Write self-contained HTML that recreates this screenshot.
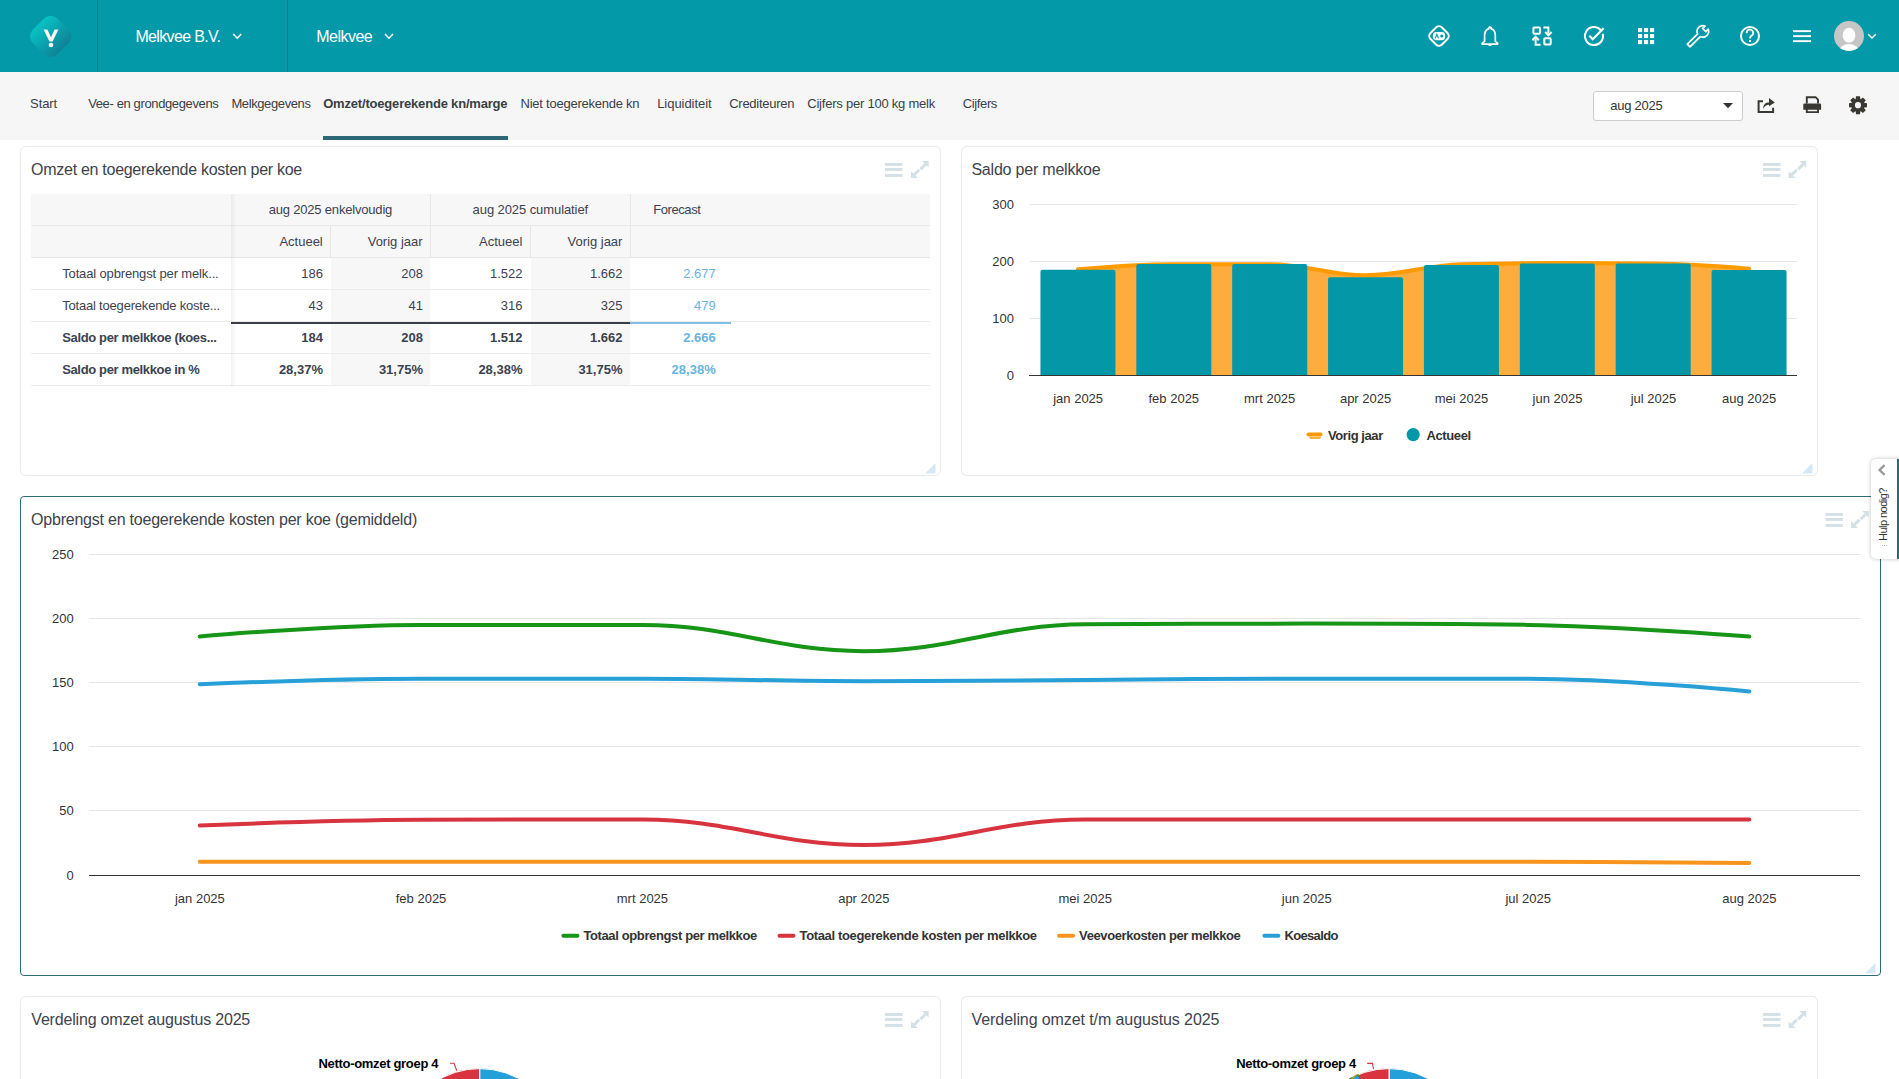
<!DOCTYPE html>
<html><head><meta charset="utf-8"><title>Melkvee dashboard</title>
<style>
html,body{margin:0;padding:0;}
body{width:1899px;height:1079px;overflow:hidden;position:relative;background:#fff;font-family:"Liberation Sans",sans-serif;}
.t{position:absolute;white-space:nowrap;line-height:1;}
svg{position:absolute;left:0;top:0;}
</style></head><body>

<div style="position:absolute;left:0px;top:0px;width:1899px;height:72px;background:#0499a9"></div>
<div style="position:absolute;left:97px;top:0px;width:1px;height:72px;background:#0a7f8d"></div>
<div style="position:absolute;left:287px;top:0px;width:1px;height:72px;background:#0a7f8d"></div>
<div style="position:absolute;left:0px;top:72px;width:1899px;height:68px;background:#f6f6f6"></div>
<div style="position:absolute;left:323px;top:136px;width:185px;height:4px;background:#2e6878"></div>
<div style="position:absolute;left:1593px;top:91px;width:150px;height:30px;background:#fff;border:1px solid #cdcdcd;border-radius:3px;box-sizing:border-box"></div>
<div style="position:absolute;left:20px;top:146px;width:921px;height:330px;background:#fff;border:1px solid #ebebeb;border-radius:6px;box-sizing:border-box;box-shadow:0 0 1px rgba(0,0,0,0.05)"></div>
<div style="position:absolute;left:961px;top:146px;width:857px;height:330px;background:#fff;border:1px solid #ebebeb;border-radius:6px;box-sizing:border-box;box-shadow:0 0 1px rgba(0,0,0,0.05)"></div>
<div style="position:absolute;left:20px;top:496px;width:1861px;height:480px;background:#fff;border:1px solid #2e6b79;border-radius:4px;box-sizing:border-box;box-shadow:0 0 1px rgba(0,0,0,0.05)"></div>
<div style="position:absolute;left:20px;top:996px;width:921px;height:125px;background:#fff;border:1px solid #ebebeb;border-radius:6px;box-sizing:border-box;box-shadow:0 0 1px rgba(0,0,0,0.05)"></div>
<div style="position:absolute;left:961px;top:996px;width:857px;height:125px;background:#fff;border:1px solid #ebebeb;border-radius:6px;box-sizing:border-box;box-shadow:0 0 1px rgba(0,0,0,0.05)"></div>
<div style="position:absolute;left:31px;top:194px;width:899px;height:64px;background:#f7f7f7"></div>
<div style="position:absolute;left:31px;top:225px;width:899px;height:1px;background:#e8e8e8"></div>
<div style="position:absolute;left:31px;top:257px;width:899px;height:1px;background:#e8e8e8"></div>
<div style="position:absolute;left:331px;top:258px;width:99px;height:128px;background:#f7f7f7"></div>
<div style="position:absolute;left:531px;top:258px;width:99px;height:128px;background:#f7f7f7"></div>
<div style="position:absolute;left:31px;top:289px;width:899px;height:1px;background:#ececec"></div>
<div style="position:absolute;left:31px;top:321px;width:899px;height:1px;background:#ececec"></div>
<div style="position:absolute;left:31px;top:353px;width:899px;height:1px;background:#ececec"></div>
<div style="position:absolute;left:31px;top:385px;width:899px;height:1px;background:#ececec"></div>
<div style="position:absolute;left:231px;top:322px;width:399px;height:1.5px;background:#3a3f47"></div>
<div style="position:absolute;left:630px;top:322px;width:101px;height:1.5px;background:#7fbfe6"></div>
<div style="position:absolute;left:430px;top:194px;width:1px;height:64px;background:#e6e6e6"></div>
<div style="position:absolute;left:630px;top:194px;width:1px;height:64px;background:#e6e6e6"></div>
<div style="position:absolute;left:330px;top:226px;width:1px;height:32px;background:#e6e6e6"></div>
<div style="position:absolute;left:530px;top:226px;width:1px;height:32px;background:#e6e6e6"></div>
<div style="position:absolute;left:231px;top:194px;width:5px;height:192px;background:linear-gradient(to right,rgba(0,0,0,0.05),rgba(0,0,0,0))"></div>
<div style="position:absolute;left:1871px;top:459px;width:40px;height:100px;background:#fff;border-radius:5px 0 0 5px;box-shadow:0 0 4px rgba(0,0,0,0.25)"></div>
<div style="position:absolute;left:1897px;top:459px;width:2px;height:100px;background:#2e6878"></div>
<svg width="1899" height="1079" viewBox="0 0 1899 1079">
<defs><linearGradient id="lg" x1="0" y1="0" x2="1" y2="0"><stop offset="0" stop-color="#08c3c5"/><stop offset="1" stop-color="#0f8296"/></linearGradient></defs>
<rect x="33.45" y="19.05" width="34.5" height="34.5" rx="9" transform="rotate(45 50.7 36.3)" fill="url(#lg)"/>
<path d="M43.6 29.6 L47.4 29.6 L51 37.2 L54.6 29.6 L58.4 29.6 L52.6 41.6 L49.4 41.6 Z" fill="#fbf6ef"/>
<circle cx="51" cy="45" r="2.3" fill="#fbf6ef"/>
<path d="M233.2 34 L237.2 38.2 L241.2 34" stroke="#fff" stroke-width="1.6" fill="none"/>
<path d="M385 34 L389 38.2 L393 34" stroke="#fff" stroke-width="1.6" fill="none"/>
<rect x="1430.9" y="27.9" width="16.2" height="16.2" rx="4.2" transform="rotate(45 1439 36)" fill="none" stroke="#fff" stroke-width="2"/>
<rect x="1432.9" y="32" width="12.2" height="8.2" rx="3.4" fill="#fff"/>
<path d="M1435.3 38.2 L1436.9 34.2 L1438.5 38.2" stroke="#0499a9" stroke-width="1.1" fill="none"/>
<circle cx="1441.8" cy="36" r="1.6" fill="#0499a9"/>
<path transform="translate(0 0.8)" d="M1490 26.3 a1 1 0 0 1 1 1.5 C1494.5 28.8 1495.3 32 1495.3 35 L1495.3 40.6 L1497.6 42.4 L1497.6 43.4 L1482.2 43.4 L1482.2 42.4 L1484.6 40.6 L1484.6 35 C1484.6 32 1485.5 28.8 1489 27.8 a1 1 0 0 1 1 -1.5 Z" fill="none" stroke="#fff" stroke-width="1.7" stroke-linejoin="round"/>
<path d="M1487.8 44.3 L1492.2 44.3 A2.2 1.8 0 0 1 1487.8 44.3 Z" fill="#fff"/>
<rect x="1533.4" y="27.6" width="6.6" height="6.2" rx="1" fill="none" stroke="#fff" stroke-width="2"/>
<rect x="1544.3" y="38.3" width="6.4" height="6.2" rx="1" fill="none" stroke="#fff" stroke-width="2"/>
<path d="M1543.4 27.4 L1548.4 27.4 L1548.4 34" fill="none" stroke="#fff" stroke-width="2"/>
<path d="M1545.2 32 L1548.4 35.4 L1551.6 32" fill="none" stroke="#fff" stroke-width="2"/>
<path d="M1540.5 44.8 L1535.6 44.8 L1535.6 38.2" fill="none" stroke="#fff" stroke-width="2"/>
<path d="M1532.4 40.2 L1535.6 36.8 L1538.8 40.2" fill="none" stroke="#fff" stroke-width="2"/>
<path d="M1600.9 30.3 A9 9 0 1 0 1602.7 33.8" fill="none" stroke="#fff" stroke-width="2"/>
<path d="M1589.4 35.8 L1592.7 39.2 L1603.6 28.2" fill="none" stroke="#fff" stroke-width="2.2"/>
<rect x="1638" y="28" width="4.1" height="4.1" fill="#fff"/>
<rect x="1638" y="34" width="4.1" height="4.1" fill="#fff"/>
<rect x="1638" y="40" width="4.1" height="4.1" fill="#fff"/>
<rect x="1644" y="28" width="4.1" height="4.1" fill="#fff"/>
<rect x="1644" y="34" width="4.1" height="4.1" fill="#fff"/>
<rect x="1644" y="40" width="4.1" height="4.1" fill="#fff"/>
<rect x="1650" y="28" width="4.1" height="4.1" fill="#fff"/>
<rect x="1650" y="34" width="4.1" height="4.1" fill="#fff"/>
<rect x="1650" y="40" width="4.1" height="4.1" fill="#fff"/>
<path transform="translate(1702.8 31.4) rotate(45)" d="M -1.9 20 L -1.9 5.4 A 5.8 5.8 0 0 1 -2.2 -5.4 L -2.2 -2 L 2.2 -2 L 2.2 -5.4 A 5.8 5.8 0 0 1 1.9 5.4 L 1.9 20 Z" fill="none" stroke="#fff" stroke-width="1.7" stroke-linejoin="round"/>
<circle cx="1750" cy="36" r="9" fill="none" stroke="#fff" stroke-width="2"/>
<path d="M1746.8 33.2 A3.2 3.2 0 1 1 1751.6 35.6 C1750.4 36.4 1750 37 1750 38.6" fill="none" stroke="#fff" stroke-width="1.8"/>
<rect x="1749" y="40" width="2" height="2" fill="#fff"/>
<rect x="1793" y="30.2" width="18" height="1.9" fill="#fff"/>
<rect x="1793" y="35.2" width="18" height="1.9" fill="#fff"/>
<rect x="1793" y="40.2" width="18" height="1.9" fill="#fff"/>
<clipPath id="av"><circle cx="1849" cy="36" r="15"/></clipPath>
<circle cx="1849" cy="36" r="15" fill="#c6c6c6"/>
<g clip-path="url(#av)"><ellipse cx="1849" cy="35.2" rx="6.4" ry="7.4" fill="#fff"/><ellipse cx="1849" cy="52" rx="10" ry="8" fill="#fff"/></g>
<path d="M1868.2 34.3 L1872 38 L1875.8 34.3" stroke="#fff" stroke-width="1.5" fill="none"/>
<path d="M1723 103 L1733 103 L1728 108.2 Z" fill="#333"/>
<path d="M1763 101.2 L1758.6 101.2 L1758.6 111.9 L1773.1 111.9 L1773.1 107.8" fill="none" stroke="#3a3832" stroke-width="2"/>
<path d="M1763.2 109 C1763.2 104.5 1765.5 102.6 1769 102.6 L1769 98 L1774.8 102.4 L1769 106.2 L1769 104.8 C1766.5 104.8 1764.5 106 1763.2 109 Z" fill="#3a3832"/>
<path d="M1806.8 103.6 L1806.8 97.2 L1815.6 97.2 L1818 99.6 L1818 103.6" fill="none" stroke="#3a3832" stroke-width="1.9"/>
<path d="M1803.3 104.8 Q1803.3 103.5 1804.6 103.5 L1819.8 103.5 Q1821.1 103.5 1821.1 104.8 L1821.1 109.7 L1803.3 109.7 Z" fill="#3a3832"/>
<path d="M1806.8 109 L1806.8 112.1 L1818 112.1 L1818 109" fill="none" stroke="#3a3832" stroke-width="1.9"/>
<path d="M1855.99 96.22 L1860.01 96.22 L1860.33 99.02 L1860.72 99.19 L1862.93 97.43 L1865.77 100.27 L1864.01 102.48 L1864.18 102.87 L1866.98 103.19 L1866.98 107.21 L1864.18 107.53 L1864.01 107.92 L1865.77 110.13 L1862.93 112.97 L1860.72 111.21 L1860.33 111.38 L1860.01 114.18 L1855.99 114.18 L1855.67 111.38 L1855.28 111.21 L1853.07 112.97 L1850.23 110.13 L1851.99 107.92 L1851.82 107.53 L1849.02 107.21 L1849.02 103.19 L1851.82 102.87 L1851.99 102.48 L1850.23 100.27 L1853.07 97.43 L1855.28 99.19 L1855.67 99.02 Z M1861.1 105.2 A3.1 3.1 0 1 0 1854.9 105.2 A3.1 3.1 0 1 0 1861.1 105.2 Z" fill="#3a3832" fill-rule="evenodd"/>
<rect x="885" y="163" width="17.4" height="2.9" fill="#d3e0e5"/>
<rect x="885" y="168" width="17.4" height="2.9" fill="#d3e0e5"/>
<rect x="885" y="174" width="17.4" height="2.9" fill="#d3e0e5"/>
<path d="M921.9 161 L928.6 161 L928.6 167.6 Z" fill="#d3e0e5"/>
<path d="M920.5 169.2 L925.5 164.2" stroke="#d3e0e5" stroke-width="3"/>
<path d="M911 178 L911 171.2 L917.8 178 Z" fill="#d3e0e5"/>
<path d="M914.2 174.8 L919.2 169.8" stroke="#d3e0e5" stroke-width="3"/>
<rect x="1763" y="163" width="17.4" height="2.9" fill="#d3e0e5"/>
<rect x="1763" y="168" width="17.4" height="2.9" fill="#d3e0e5"/>
<rect x="1763" y="174" width="17.4" height="2.9" fill="#d3e0e5"/>
<path d="M1799.5 161 L1806.1999999999998 161 L1806.1999999999998 167.6 Z" fill="#d3e0e5"/>
<path d="M1798.1 169.2 L1803.1 164.2" stroke="#d3e0e5" stroke-width="3"/>
<path d="M1788.6 178 L1788.6 171.2 L1795.3999999999999 178 Z" fill="#d3e0e5"/>
<path d="M1791.8 174.8 L1796.8 169.8" stroke="#d3e0e5" stroke-width="3"/>
<rect x="1825.5" y="513" width="17.4" height="2.9" fill="#d3e0e5"/>
<rect x="1825.5" y="518" width="17.4" height="2.9" fill="#d3e0e5"/>
<rect x="1825.5" y="524" width="17.4" height="2.9" fill="#d3e0e5"/>
<path d="M1862.1000000000001 511 L1868.8 511 L1868.8 517.6 Z" fill="#d3e0e5"/>
<path d="M1860.7 519.2 L1865.7 514.2" stroke="#d3e0e5" stroke-width="3"/>
<path d="M1851.2 528 L1851.2 521.2 L1858.0 528 Z" fill="#d3e0e5"/>
<path d="M1854.4 524.8 L1859.4 519.8" stroke="#d3e0e5" stroke-width="3"/>
<rect x="885" y="1013" width="17.4" height="2.9" fill="#d3e0e5"/>
<rect x="885" y="1018" width="17.4" height="2.9" fill="#d3e0e5"/>
<rect x="885" y="1024" width="17.4" height="2.9" fill="#d3e0e5"/>
<path d="M921.9 1011 L928.6 1011 L928.6 1017.6 Z" fill="#d3e0e5"/>
<path d="M920.5 1019.2 L925.5 1014.2" stroke="#d3e0e5" stroke-width="3"/>
<path d="M911 1028 L911 1021.2 L917.8 1028 Z" fill="#d3e0e5"/>
<path d="M914.2 1024.8 L919.2 1019.8" stroke="#d3e0e5" stroke-width="3"/>
<rect x="1763" y="1013" width="17.4" height="2.9" fill="#d3e0e5"/>
<rect x="1763" y="1018" width="17.4" height="2.9" fill="#d3e0e5"/>
<rect x="1763" y="1024" width="17.4" height="2.9" fill="#d3e0e5"/>
<path d="M1799.5 1011 L1806.1999999999998 1011 L1806.1999999999998 1017.6 Z" fill="#d3e0e5"/>
<path d="M1798.1 1019.2 L1803.1 1014.2" stroke="#d3e0e5" stroke-width="3"/>
<path d="M1788.6 1028 L1788.6 1021.2 L1795.3999999999999 1028 Z" fill="#d3e0e5"/>
<path d="M1791.8 1024.8 L1796.8 1019.8" stroke="#d3e0e5" stroke-width="3"/>
<path d="M926 473 L935 464 L935 473 Z" fill="#d6e7f5" stroke="#d6e7f5" stroke-width="1" stroke-linejoin="round"/>
<path d="M1803 473 L1812 464 L1812 473 Z" fill="#d6e7f5" stroke="#d6e7f5" stroke-width="1" stroke-linejoin="round"/>
<path d="M1866 973 L1875 964 L1875 973 Z" fill="#d6e7f5" stroke="#d6e7f5" stroke-width="1" stroke-linejoin="round"/>
<rect x="1030" y="204.0" width="767" height="1" fill="#e6e6e6"/>
<rect x="1030" y="261.0" width="767" height="1" fill="#e6e6e6"/>
<rect x="1030" y="318.0" width="767" height="1" fill="#e6e6e6"/>
<path d="M 1077.94 269.29 C 1077.94 269.29 1135.46 264.18 1173.81 264.18 C 1212.16 264.18 1231.34 264.18 1269.69 264.18 C 1308.04 264.18 1327.21 275.26 1365.56 275.26 C 1403.91 275.26 1423.09 265.31 1461.44 264.18 C 1499.79 263.04 1518.96 263.04 1557.31 263.04 C 1595.66 263.04 1614.84 263.04 1653.19 263.61 C 1691.54 264.18 1749.06 268.72 1749.06 268.72 L 1749.06 375 L 1077.94 375 Z" fill="#fdac3d"/>
<path d="M 1077.94 269.29 C 1077.94 269.29 1135.46 264.18 1173.81 264.18 C 1212.16 264.18 1231.34 264.18 1269.69 264.18 C 1308.04 264.18 1327.21 275.26 1365.56 275.26 C 1403.91 275.26 1423.09 265.31 1461.44 264.18 C 1499.79 263.04 1518.96 263.04 1557.31 263.04 C 1595.66 263.04 1614.84 263.04 1653.19 263.61 C 1691.54 264.18 1749.06 268.72 1749.06 268.72" fill="none" stroke="#ff9a00" stroke-width="4" stroke-linecap="round"/>
<path d="M1040.44 375 L1040.44 271.86 Q1040.44 269.86 1042.44 269.86 L1113.44 269.86 Q1115.44 269.86 1115.44 271.86 L1115.44 375 Z" fill="#0497a7"/>
<path d="M1136.31 375 L1136.31 265.89 Q1136.31 263.89 1138.31 263.89 L1209.31 263.89 Q1211.31 263.89 1211.31 265.89 L1211.31 375 Z" fill="#0497a7"/>
<path d="M1232.19 375 L1232.19 266.00 Q1232.19 264.00 1234.19 264.00 L1305.19 264.00 Q1307.19 264.00 1307.19 266.00 L1307.19 375 Z" fill="#0497a7"/>
<path d="M1328.06 375 L1328.06 279.25 Q1328.06 277.25 1330.06 277.25 L1401.06 277.25 Q1403.06 277.25 1403.06 279.25 L1403.06 375 Z" fill="#0497a7"/>
<path d="M1423.94 375 L1423.94 266.97 Q1423.94 264.97 1425.94 264.97 L1496.94 264.97 Q1498.94 264.97 1498.94 266.97 L1498.94 375 Z" fill="#0497a7"/>
<path d="M1519.81 375 L1519.81 265.61 Q1519.81 263.61 1521.81 263.61 L1592.81 263.61 Q1594.81 263.61 1594.81 265.61 L1594.81 375 Z" fill="#0497a7"/>
<path d="M1615.69 375 L1615.69 265.61 Q1615.69 263.61 1617.69 263.61 L1688.69 263.61 Q1690.69 263.61 1690.69 265.61 L1690.69 375 Z" fill="#0497a7"/>
<path d="M1711.56 375 L1711.56 272.09 Q1711.56 270.09 1713.56 270.09 L1784.56 270.09 Q1786.56 270.09 1786.56 272.09 L1786.56 375 Z" fill="#0497a7"/>
<rect x="1029" y="375" width="768" height="1" fill="#333333"/>
<path d="M1308.5 434.6 L1320.5 434.6" stroke="#ff9a00" stroke-width="4" stroke-linecap="round"/>
<path d="M1309 437 L1321 437 L1320 439 L1310 439 Z" fill="#fdac3d"/>
<circle cx="1413.2" cy="434.6" r="6.6" fill="#0497a7"/>
<rect x="89" y="810.00" width="1771" height="1" fill="#e6e6e6"/>
<rect x="89" y="746.00" width="1771" height="1" fill="#e6e6e6"/>
<rect x="89" y="682.00" width="1771" height="1" fill="#e6e6e6"/>
<rect x="89" y="618.00" width="1771" height="1" fill="#e6e6e6"/>
<rect x="89" y="554.00" width="1771" height="1" fill="#e6e6e6"/>
<rect x="89" y="875" width="1771" height="1" fill="#333333"/>
<path d="M 199.69 825.48 C 199.69 825.48 332.51 820.23 421.06 819.84 C 509.61 819.46 553.89 819.46 642.44 819.46 C 730.99 819.46 775.26 845.06 863.81 845.06 C 952.36 845.06 996.64 819.46 1085.19 819.46 C 1173.74 819.46 1218.01 819.46 1306.56 819.46 C 1395.11 819.46 1439.39 819.46 1527.94 819.46 C 1616.49 819.46 1749.31 819.46 1749.31 819.46" fill="none" stroke="#d7343f" stroke-width="4" stroke-linecap="round"/>
<path d="M 199.69 861.70 C 199.69 861.70 332.51 861.70 421.06 861.70 C 509.61 861.70 553.89 861.70 642.44 861.70 C 730.99 861.70 775.26 861.70 863.81 861.70 C 952.36 861.70 996.64 861.70 1085.19 861.70 C 1173.74 861.70 1218.01 861.70 1306.56 861.70 C 1395.11 861.70 1439.39 861.70 1527.94 861.70 C 1616.49 861.70 1749.31 862.98 1749.31 862.98" fill="none" stroke="#f7941d" stroke-width="4" stroke-linecap="round"/>
<path d="M 199.69 684.29 C 199.69 684.29 332.51 678.66 421.06 678.66 C 509.61 678.66 553.89 678.66 642.44 678.66 C 730.99 678.66 775.26 681.22 863.81 681.22 C 952.36 681.22 996.64 680.45 1085.19 679.94 C 1173.74 679.43 1218.01 678.66 1306.56 678.66 C 1395.11 678.66 1439.39 678.66 1527.94 678.66 C 1616.49 678.66 1749.31 691.46 1749.31 691.46" fill="none" stroke="#27a0d8" stroke-width="4" stroke-linecap="round"/>
<path d="M 199.69 636.42 C 199.69 636.42 332.51 624.90 421.06 624.90 C 509.61 624.90 553.89 624.90 642.44 624.90 C 730.99 624.90 775.26 651.14 863.81 651.14 C 952.36 651.14 996.64 624.90 1085.19 624.26 C 1173.74 623.62 1218.01 623.62 1306.56 623.62 C 1395.11 623.62 1439.39 623.62 1527.94 624.90 C 1616.49 626.18 1749.31 636.42 1749.31 636.42" fill="none" stroke="#169516" stroke-width="4" stroke-linecap="round"/>
<path d="M563.4 935.8 L577.4 935.8" stroke="#169516" stroke-width="4" stroke-linecap="round"/>
<path d="M779.5 935.8 L793.5 935.8" stroke="#d7343f" stroke-width="4" stroke-linecap="round"/>
<path d="M1059.1 935.8 L1073.1 935.8" stroke="#f7941d" stroke-width="4" stroke-linecap="round"/>
<path d="M1264.4 935.8 L1278.4 935.8" stroke="#27a0d8" stroke-width="4" stroke-linecap="round"/>
<path d="M479.7 1150 L479.70 1068.60 A81.4 81.4 0 0 1 520.40 1220.49 Z" fill="#23a0da" stroke="#fff" stroke-width="1"/>
<path d="M479.7 1150 L403.21 1122.16 A81.4 81.4 0 0 1 479.70 1068.60 Z" fill="#d8333f" stroke="#fff" stroke-width="1"/>
<path d="M450 1063.3 L454 1063.3 L456.8 1070.8" fill="none" stroke="#d8333f" stroke-width="1.1"/>
<path d="M1389 1150 L1389.00 1068.60 A81.4 81.4 0 0 1 1429.70 1220.49 Z" fill="#23a0da" stroke="#fff" stroke-width="1"/>
<path d="M1389 1150 L1312.51 1122.16 A81.4 81.4 0 0 1 1389.00 1068.60 Z" fill="#d8333f" stroke="#fff" stroke-width="1"/>
<path d="M1367.2 1063.4 L1372.5 1063.4 L1373.5 1069" fill="none" stroke="#d8333f" stroke-width="1.1"/>
<path d="M1389 1150 L1341.15 1084.15 A81.4 81.4 0 0 1 1358.24 1074.63 Z" fill="#23a0da" stroke="#169516" stroke-width="1"/>
<path d="M1352 1079 L1356.5 1074.5" stroke="#f7941d" stroke-width="1.2"/>
<path d="M1884.6 465.2 L1879.6 470 L1884.6 474.8" fill="none" stroke="#999" stroke-width="2.3"/>
<rect x="1882" y="545" width="1" height="1" fill="#bbb"/>
<rect x="1884" y="545" width="1" height="1" fill="#bbb"/>
<rect x="1886" y="545" width="1" height="1" fill="#bbb"/>
</svg>
<div class="t" style="left:135.40px;top:29.00px;font-size:16px;color:#fff;letter-spacing:-0.655px;">Melkvee B.V.</div>
<div class="t" style="left:316.20px;top:29.00px;font-size:16px;color:#fff;letter-spacing:-0.517px;">Melkvee</div>
<div class="t" style="left:30.10px;top:97.00px;font-size:13px;color:#3a3f47;letter-spacing:-0.100px;">Start</div>
<div class="t" style="left:88.20px;top:97.00px;font-size:13px;color:#3a3f47;letter-spacing:-0.375px;">Vee- en grondgegevens</div>
<div class="t" style="left:231.40px;top:97.00px;font-size:13px;color:#3a3f47;letter-spacing:-0.391px;">Melkgegevens</div>
<div class="t" style="left:323.20px;top:97.00px;font-size:13px;color:#3a3f47;font-weight:bold;letter-spacing:-0.188px;">Omzet/toegerekende kn/marge</div>
<div class="t" style="left:520.50px;top:97.00px;font-size:13px;color:#3a3f47;letter-spacing:-0.237px;">Niet toegerekende kn</div>
<div class="t" style="left:657.20px;top:97.00px;font-size:13px;color:#3a3f47;letter-spacing:-0.050px;">Liquiditeit</div>
<div class="t" style="left:729.20px;top:97.00px;font-size:13px;color:#3a3f47;letter-spacing:-0.260px;">Crediteuren</div>
<div class="t" style="left:807.30px;top:97.00px;font-size:13px;color:#3a3f47;letter-spacing:-0.227px;">Cijfers per 100 kg melk</div>
<div class="t" style="left:962.80px;top:97.00px;font-size:13px;color:#3a3f47;letter-spacing:-0.383px;">Cijfers</div>
<div class="t" style="left:1610.20px;top:99.00px;font-size:13px;color:#333;letter-spacing:-0.229px;">aug 2025</div>
<div class="t" style="left:31.10px;top:162.00px;font-size:16px;color:#3d434d;letter-spacing:-0.283px;">Omzet en toegerekende kosten per koe</div>
<div class="t" style="left:971.40px;top:162.00px;font-size:16px;color:#3d434d;letter-spacing:-0.206px;">Saldo per melkkoe</div>
<div class="t" style="left:31.10px;top:512.00px;font-size:16px;color:#3d434d;letter-spacing:-0.225px;">Opbrengst en toegerekende kosten per koe (gemiddeld)</div>
<div class="t" style="left:31.30px;top:1012.00px;font-size:16px;color:#3d434d;letter-spacing:-0.186px;">Verdeling omzet augustus 2025</div>
<div class="t" style="left:971.60px;top:1012.00px;font-size:16px;color:#3d434d;letter-spacing:-0.094px;">Verdeling omzet t/m augustus 2025</div>
<div class="t" style="left:268.70px;top:203.00px;font-size:13px;color:#3b4250;letter-spacing:-0.189px;">aug 2025 enkelvoudig</div>
<div class="t" style="left:472.60px;top:203.00px;font-size:13px;color:#3b4250;letter-spacing:-0.083px;">aug 2025 cumulatief</div>
<div class="t" style="left:653.20px;top:203.00px;font-size:13px;color:#3b4250;letter-spacing:-0.414px;">Forecast</div>
<div class="t" style="left:279.40px;top:235.00px;font-size:13px;color:#3b4250;">Actueel</div>
<div class="t" style="left:367.70px;top:235.00px;font-size:13px;color:#3b4250;">Vorig jaar</div>
<div class="t" style="left:479.00px;top:235.00px;font-size:13px;color:#3b4250;">Actueel</div>
<div class="t" style="left:567.50px;top:235.00px;font-size:13px;color:#3b4250;">Vorig jaar</div>
<div class="t" style="left:62.20px;top:267.00px;font-size:13px;color:#3b4250;letter-spacing:-0.144px;">Totaal opbrengst per melk...</div>
<div class="t" style="left:301.30px;top:267.00px;font-size:13px;color:#3b4250;">186</div>
<div class="t" style="left:401.30px;top:267.00px;font-size:13px;color:#3b4250;">208</div>
<div class="t" style="left:490.00px;top:267.00px;font-size:13px;color:#3b4250;">1.522</div>
<div class="t" style="left:590.00px;top:267.00px;font-size:13px;color:#3b4250;">1.662</div>
<div class="t" style="left:683.20px;top:267.00px;font-size:13px;color:#6ab4e0;">2.677</div>
<div class="t" style="left:62.20px;top:299.00px;font-size:13px;color:#3b4250;letter-spacing:-0.196px;">Totaal toegerekende koste...</div>
<div class="t" style="left:308.50px;top:299.00px;font-size:13px;color:#3b4250;">43</div>
<div class="t" style="left:408.50px;top:299.00px;font-size:13px;color:#3b4250;">41</div>
<div class="t" style="left:500.80px;top:299.00px;font-size:13px;color:#3b4250;">316</div>
<div class="t" style="left:600.80px;top:299.00px;font-size:13px;color:#3b4250;">325</div>
<div class="t" style="left:694.00px;top:299.00px;font-size:13px;color:#6ab4e0;">479</div>
<div class="t" style="left:62.20px;top:331.00px;font-size:13px;color:#3b4250;font-weight:bold;letter-spacing:-0.348px;">Saldo per melkkoe (koes...</div>
<div class="t" style="left:301.30px;top:331.00px;font-size:13px;color:#3b4250;font-weight:bold;">184</div>
<div class="t" style="left:401.30px;top:331.00px;font-size:13px;color:#3b4250;font-weight:bold;">208</div>
<div class="t" style="left:490.00px;top:331.00px;font-size:13px;color:#3b4250;font-weight:bold;">1.512</div>
<div class="t" style="left:590.00px;top:331.00px;font-size:13px;color:#3b4250;font-weight:bold;">1.662</div>
<div class="t" style="left:683.20px;top:331.00px;font-size:13px;color:#6ab4e0;font-weight:bold;">2.666</div>
<div class="t" style="left:62.20px;top:363.00px;font-size:13px;color:#3b4250;font-weight:bold;letter-spacing:-0.357px;">Saldo per melkkoe in %</div>
<div class="t" style="left:278.90px;top:363.00px;font-size:13px;color:#3b4250;font-weight:bold;">28,37%</div>
<div class="t" style="left:378.90px;top:363.00px;font-size:13px;color:#3b4250;font-weight:bold;">31,75%</div>
<div class="t" style="left:478.40px;top:363.00px;font-size:13px;color:#3b4250;font-weight:bold;">28,38%</div>
<div class="t" style="left:578.40px;top:363.00px;font-size:13px;color:#3b4250;font-weight:bold;">31,75%</div>
<div class="t" style="left:671.60px;top:363.00px;font-size:13px;color:#6ab4e0;font-weight:bold;">28,38%</div>
<div class="t" style="left:992.30px;top:198.00px;font-size:13px;color:#333;">300</div>
<div class="t" style="left:992.30px;top:255.00px;font-size:13px;color:#333;">200</div>
<div class="t" style="left:992.30px;top:312.00px;font-size:13px;color:#333;">100</div>
<div class="t" style="left:1006.80px;top:369.00px;font-size:13px;color:#333;">0</div>
<div class="t" style="left:1053.19px;top:392.00px;font-size:13px;color:#333;">jan 2025</div>
<div class="t" style="left:1148.51px;top:392.00px;font-size:13px;color:#333;">feb 2025</div>
<div class="t" style="left:1244.04px;top:392.00px;font-size:13px;color:#333;">mrt 2025</div>
<div class="t" style="left:1339.91px;top:392.00px;font-size:13px;color:#333;">apr 2025</div>
<div class="t" style="left:1434.69px;top:392.00px;font-size:13px;color:#333;">mei 2025</div>
<div class="t" style="left:1532.56px;top:392.00px;font-size:13px;color:#333;">jun 2025</div>
<div class="t" style="left:1630.64px;top:392.00px;font-size:13px;color:#333;">jul 2025</div>
<div class="t" style="left:1721.96px;top:392.00px;font-size:13px;color:#333;">aug 2025</div>
<div class="t" style="left:1328.00px;top:429.00px;font-size:13px;color:#333;font-weight:bold;letter-spacing:-0.422px;">Vorig jaar</div>
<div class="t" style="left:1426.40px;top:429.00px;font-size:13px;color:#333;font-weight:bold;letter-spacing:-0.367px;">Actueel</div>
<div class="t" style="left:52.10px;top:548.00px;font-size:13px;color:#333;">250</div>
<div class="t" style="left:52.10px;top:612.00px;font-size:13px;color:#333;">200</div>
<div class="t" style="left:52.10px;top:676.00px;font-size:13px;color:#333;">150</div>
<div class="t" style="left:52.10px;top:740.00px;font-size:13px;color:#333;">100</div>
<div class="t" style="left:59.30px;top:804.00px;font-size:13px;color:#333;">50</div>
<div class="t" style="left:66.60px;top:869.00px;font-size:13px;color:#333;">0</div>
<div class="t" style="left:174.94px;top:892.00px;font-size:13px;color:#333;">jan 2025</div>
<div class="t" style="left:395.76px;top:892.00px;font-size:13px;color:#333;">feb 2025</div>
<div class="t" style="left:616.79px;top:892.00px;font-size:13px;color:#333;">mrt 2025</div>
<div class="t" style="left:838.16px;top:892.00px;font-size:13px;color:#333;">apr 2025</div>
<div class="t" style="left:1058.44px;top:892.00px;font-size:13px;color:#333;">mei 2025</div>
<div class="t" style="left:1281.81px;top:892.00px;font-size:13px;color:#333;">jun 2025</div>
<div class="t" style="left:1505.39px;top:892.00px;font-size:13px;color:#333;">jul 2025</div>
<div class="t" style="left:1722.21px;top:892.00px;font-size:13px;color:#333;">aug 2025</div>
<div class="t" style="left:583.40px;top:929.00px;font-size:13px;color:#333;font-weight:bold;letter-spacing:-0.374px;">Totaal opbrengst per melkkoe</div>
<div class="t" style="left:799.50px;top:929.00px;font-size:13px;color:#333;font-weight:bold;letter-spacing:-0.351px;">Totaal toegerekende kosten per melkkoe</div>
<div class="t" style="left:1079.10px;top:929.00px;font-size:13px;color:#333;font-weight:bold;letter-spacing:-0.400px;">Veevoerkosten per melkkoe</div>
<div class="t" style="left:1284.40px;top:929.00px;font-size:13px;color:#333;font-weight:bold;letter-spacing:-0.643px;">Koesaldo</div>
<div class="t" style="left:318.50px;top:1057.00px;font-size:13px;color:#000;font-weight:bold;letter-spacing:-0.311px;">Netto-omzet groep 4</div>
<div class="t" style="left:1236.20px;top:1057.00px;font-size:13px;color:#000;font-weight:bold;letter-spacing:-0.311px;">Netto-omzet groep 4</div>
<div class="t" style="left:1887.4px;top:540.8px;font-size:11px;color:#333;letter-spacing:-0.530px;transform-origin:0 0;transform:rotate(-90deg) translate(-0.00px,-9px)">Hulp nodig?</div>
</body></html>
